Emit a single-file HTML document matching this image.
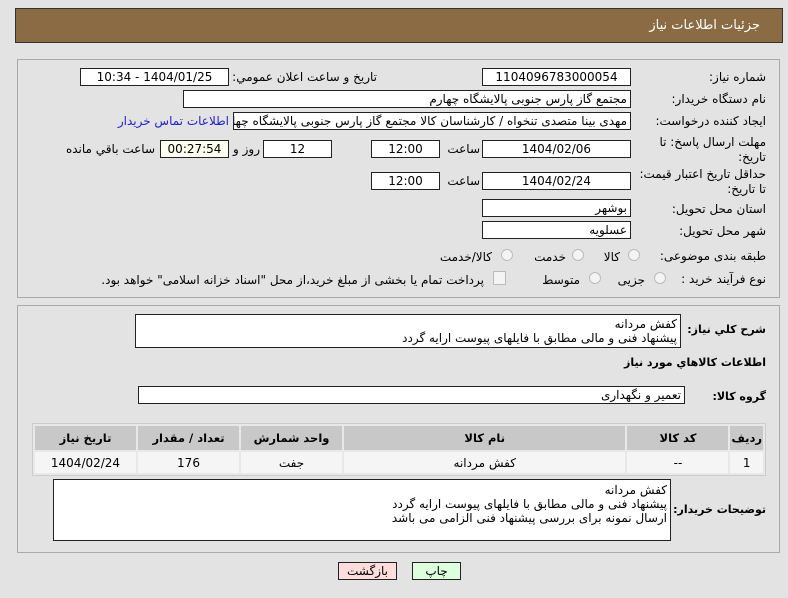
<!DOCTYPE html>
<html><head><meta charset="utf-8"><style>
body{margin:0;width:788px;height:598px;background:#e3e3e3;font-family:"DejaVu Sans","Liberation Sans",sans-serif;font-size:12px;color:#000;position:relative;overflow:hidden;direction:rtl}
.a{position:absolute;white-space:nowrap}
.f{position:absolute;background:#fff;border:1px solid #222;box-sizing:border-box;height:18px;line-height:16px;padding:0 3px;white-space:nowrap;overflow:hidden}
.c{text-align:center}
.l{position:absolute;white-space:nowrap;text-align:right}
.b{font-weight:bold;font-size:11px}
.r{position:absolute;width:12px;height:12px;border-radius:50%;border:1px solid #bbb;background:#f4f4f4;box-sizing:border-box}
table{position:absolute;left:32px;top:423px;width:734px;border-collapse:separate;border-spacing:2px;background:#e8e8e8;border:1px solid #ccc}
th{background:#c8c8c8;height:22px;font-weight:bold;font-size:11.5px}
td{background:#f5f5f5;height:19px;text-align:center}
</style></head><body>
<div class="a" style="left:15px;top:8px;width:768px;height:35px;background:#8b6b43;border:1px solid #333;box-sizing:border-box"></div>
<div class="a" style="right:28px;top:18px;color:#fff;font-size:13px">جزئیات اطلاعات نیاز</div>
<div class="a" style="left:17px;top:59px;width:763px;height:239px;border:1px solid #aaa;box-sizing:border-box"></div>
<div class="a" style="left:17px;top:305px;width:763px;height:248px;border:1px solid #aaa;box-sizing:border-box"></div>

<div class="l" style="right:22px;top:70px">شماره نیاز:</div>
<div class="f c" style="left:482px;top:68px;width:149px">1104096783000054</div>
<div class="l" style="right:411px;top:70px">تاریخ و ساعت اعلان عمومي:</div>
<div class="f c" style="left:80px;top:68px;width:149px">1404/01/25 - 10:34</div>

<div class="l" style="right:22px;top:92px">نام دستگاه خریدار:</div>
<div class="f" style="left:183px;top:90px;width:448px">مجتمع گاز پارس جنوبی  پالایشگاه چهارم</div>

<div class="l" style="right:22px;top:114px">ایجاد کننده درخواست:</div>
<div class="f" style="left:233px;top:112px;width:398px">مهدی بینا متصدی تنخواه / کارشناسان کالا مجتمع گاز پارس جنوبی  پالایشگاه چهارم</div>
<div class="l" style="right:559px;top:114px;color:#2222cc">اطلاعات تماس خریدار</div>

<div class="l" style="right:22px;top:135px;line-height:15px;white-space:normal;width:110px">مهلت ارسال پاسخ: تا تاریخ:</div>
<div class="f c" style="left:482px;top:140px;width:149px">1404/02/06</div>
<div class="l" style="right:308px;top:142px">ساعت</div>
<div class="f c" style="left:371px;top:140px;width:69px">12:00</div>
<div class="f c" style="left:263px;top:140px;width:69px">12</div>
<div class="l" style="right:528px;top:142px">روز و</div>
<div class="f c" style="left:160px;top:140px;width:69px;background:#fffff0">00:27:54</div>
<div class="l" style="right:633px;top:142px">ساعت باقي مانده</div>

<div class="l" style="right:22px;top:167px;line-height:15px;width:135px;white-space:normal">حداقل تاریخ اعتبار قیمت: تا تاریخ:</div>
<div class="f c" style="left:482px;top:172px;width:149px">1404/02/24</div>
<div class="l" style="right:308px;top:174px">ساعت</div>
<div class="f c" style="left:371px;top:172px;width:69px">12:00</div>

<div class="l" style="right:22px;top:202px">استان محل تحویل:</div>
<div class="f" style="left:482px;top:199px;width:149px">بوشهر</div>
<div class="l" style="right:22px;top:224px">شهر محل تحویل:</div>
<div class="f" style="left:482px;top:221px;width:149px">عسلویه</div>

<div class="l" style="right:22px;top:249px">طبقه بندی موضوعی:</div>
<div class="r" style="left:628px;top:249px"></div><div class="l" style="right:168px;top:250px">کالا</div>
<div class="r" style="left:572px;top:249px"></div><div class="l" style="right:222px;top:250px">خدمت</div>
<div class="r" style="left:501px;top:249px"></div><div class="l" style="right:296px;top:250px">کالا/خدمت</div>

<div class="l" style="right:22px;top:272px">نوع فرآیند خرید :</div>
<div class="r" style="left:654px;top:272px"></div><div class="l" style="right:143px;top:273px">جزیی</div>
<div class="r" style="left:589px;top:272px"></div><div class="l" style="right:208px;top:273px">متوسط</div>
<div class="a" style="left:493px;top:271px;width:11px;height:12px;border:1px solid #bbb;background:#f4f4f4"></div>
<div class="l" style="right:304px;top:273px">پرداخت تمام یا بخشی از مبلغ خرید،از محل "اسناد خزانه اسلامی" خواهد بود.</div>

<div class="l b" style="right:22px;top:323px">شرح کلي نیاز:</div>
<div class="f" style="left:135px;top:314px;width:546px;height:34px;line-height:14px;padding-top:2px">کفش مردانه<br>پیشنهاد فنی و مالی مطابق با فایلهای پیوست ارایه گردد</div>
<div class="l b" style="right:22px;top:356px">اطلاعات کالاهاي مورد نیاز</div>
<div class="l b" style="right:22px;top:390px">گروه کالا:</div>
<div class="f" style="left:138px;top:386px;width:547px">تعمیر و نگهداری</div>

<table><tr><th style="width:25px">ردیف</th><th style="width:99px">کد کالا</th><th>نام کالا</th><th style="width:99px">واحد شمارش</th><th style="width:99px">تعداد / مقدار</th><th style="width:99px">تاریخ نیاز</th></tr>
<tr><td>1</td><td>--</td><td>کفش مردانه</td><td>جفت</td><td>176</td><td>1404/02/24</td></tr></table>

<div class="l b" style="right:22px;top:503px">توضیحات خریدار:</div>
<div class="f" style="left:53px;top:479px;width:618px;height:62px;line-height:14px;padding-top:3px">کفش مردانه<br>پیشنهاد فنی و مالی مطابق با فایلهای پیوست ارایه گردد<br>ارسال نمونه برای بررسی پیشنهاد فنی الزامی می باشد</div>

<div class="f c" style="left:338px;top:562px;width:59px;height:18px;background:#fdd">بازگشت</div>
<div class="f c" style="left:412px;top:562px;width:49px;height:18px;background:#dfd">چاپ</div>
</body></html>
